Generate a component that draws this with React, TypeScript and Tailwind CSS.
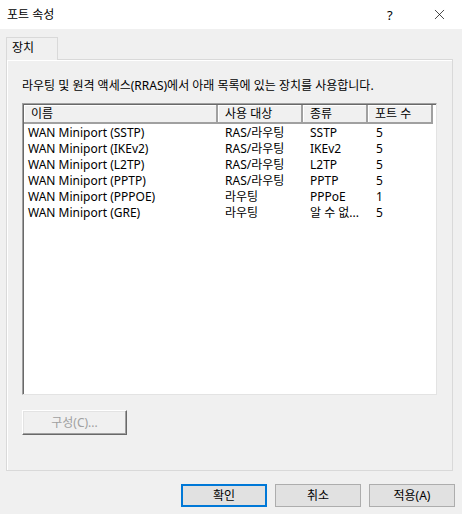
import { X } from "lucide-react";

const rows = [
  ["WAN Miniport (SSTP)", "RAS/라우팅", "SSTP", "5"],
  ["WAN Miniport (IKEv2)", "RAS/라우팅", "IKEv2", "5"],
  ["WAN Miniport (L2TP)", "RAS/라우팅", "L2TP", "5"],
  ["WAN Miniport (PPTP)", "RAS/라우팅", "PPTP", "5"],
  ["WAN Miniport (PPPOE)", "라우팅", "PPPoE", "1"],
  ["WAN Miniport (GRE)", "라우팅", "알 수 없...", "5"],
];

const cols = [
  { label: "이름", w: "w-[194px]" },
  { label: "사용 대상", w: "w-[85px]" },
  { label: "종류", w: "w-[65px]" },
  { label: "포트 수", w: "w-[65px]" },
];

const font = { fontFamily: '"Noto Sans", "Noto Sans CJK KR", sans-serif' };

const App = () => {
  return (
    <div className="w-[462px] h-[514px] flex flex-col bg-[#f0f0f0] text-[12px] leading-[16px] text-black overflow-hidden" style={font}>
      {/* TITLE */}
      <div className="h-[29px] bg-white flex items-center pl-[7px] shrink-0">
        <span className="flex-1">포트 속성</span>
        <span className="w-[10px] text-[13px] mr-[34px]">?</span>
        <X className="w-[17px] h-[17px] mr-[14px]" strokeWidth={1} />
      </div>

      {/* TABS */}
      <div className="pt-[8px] pl-[6px] flex">
        <div className="w-[52px] h-[23px] border border-b-0 border-[#d9d9d9] bg-[#f0f0f0] pl-[5px] pt-[2px] -mb-[1px] relative z-10">장치</div>
      </div>

      {/* PANEL */}
      <div className="ml-[6px] w-[447px] h-[412px] border border-[#d9d9d9] shadow-[inset_1px_1px_0_#ffffff] flex flex-col px-[15px]">
        <p className="mt-[18px]">라우팅 및 원격 액세스(RRAS)에서 아래 목록에 있는 장치를 사용합니다.</p>

        {/* LIST */}
        <div className="mt-[9px] w-[415px] h-[292px] bg-white border border-t-[#a0a0a0] border-l-[#a0a0a0] border-r-[#e3e3e3] border-b-[#e3e3e3] shadow-[inset_1px_1px_0_#696969] pl-[1px] pt-[1px] flex flex-col">
          <div className="flex h-[19px] shrink-0">
            {cols.map((c, i) => (
              <div key={i} className={`${c.w} h-[19px] bg-[#f0f0f0] border-r-2 border-b-2 border-[#a0a0a0] shadow-[inset_1px_1px_0_#ffffff] pl-[7px] leading-[17px]`}>{c.label}</div>
            ))}
          </div>
          <div className="pt-[1px]">
            {rows.map((r, i) => (
              <div key={i} className="flex h-[16px]">
                <div className="w-[194px] pl-[4px] whitespace-nowrap">{r[0]}</div>
                <div className="w-[85px] pl-[7px] whitespace-nowrap">{r[1]}</div>
                <div className="w-[65px] pl-[7px] whitespace-nowrap">{r[2]}</div>
                <div className="w-[65px] pl-[8px] whitespace-nowrap">{r[3]}</div>
              </div>
            ))}
          </div>
        </div>

        <div className="mt-[15px] w-[105px] h-[25px] border border-t-[#ffffff] border-l-[#ffffff] border-r-[#696969] border-b-[#696969] shadow-[inset_-1px_-1px_0_#a0a0a0,inset_1px_1px_0_#e3e3e3] flex items-center justify-center text-[#a0a0a0]">구성(C)...</div>
      </div>

      {/* FOOTER */}
      <div className="flex justify-end gap-[8px] pr-[7px] mt-[13px]">
        <div className="w-[86px] h-[23px] bg-[#e1e1e1] border-2 border-[#0078d7] flex items-center justify-center">확인</div>
        <div className="w-[86px] h-[23px] bg-[#e1e1e1] border border-[#adadad] flex items-center justify-center">취소</div>
        <div className="w-[86px] h-[23px] bg-[#e1e1e1] border border-[#adadad] flex items-center justify-center">적용(A)</div>
      </div>
    </div>
  );
};

export default App;
